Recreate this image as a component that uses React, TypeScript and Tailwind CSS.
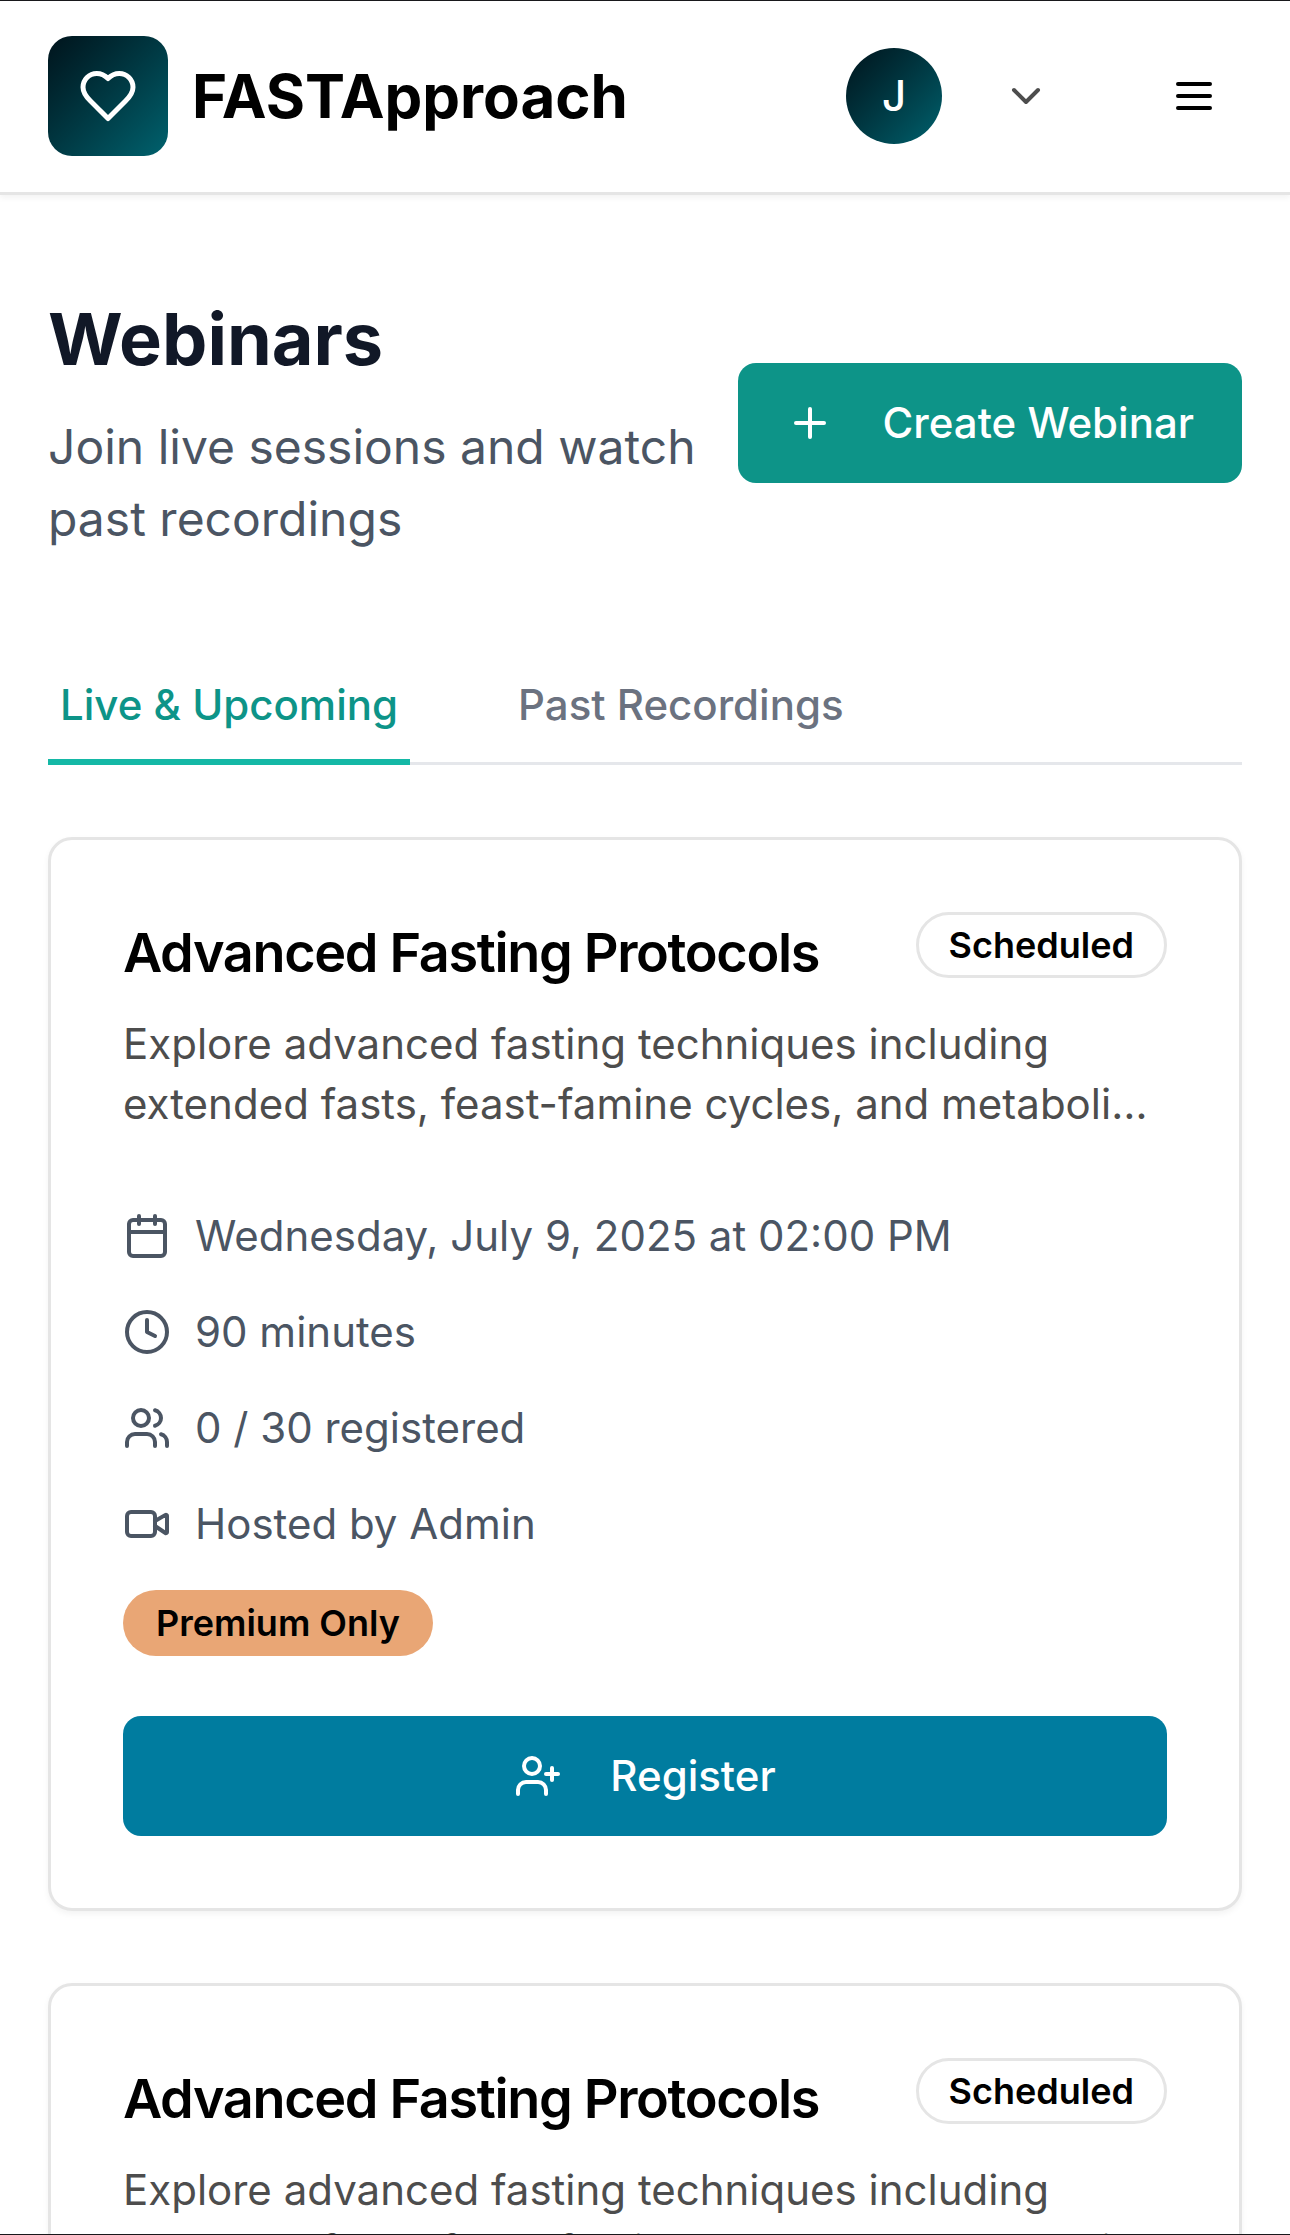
import React from "react";
import { Calendar, ChevronDown, Clock, Plus, UserPlus, Users, Video } from "lucide-react";

const webinars = [
  {
    id: 1,
    title: "Advanced Fasting Protocols",
    description:
      "Explore advanced fasting techniques including extended fasts, feast-famine cycles, and metabolic flexibility.",
    date: "Wednesday, July 9, 2025 at 02:00 PM",
    duration: "90 minutes",
    registered: "0 / 30 registered",
    host: "Hosted by Admin",
  },
  {
    id: 2,
    title: "Advanced Fasting Protocols",
    description:
      "Explore advanced fasting techniques including extended fasts, feast-famine cycles, and metabolic flexibility.",
    date: "Wednesday, July 9, 2025 at 02:00 PM",
    duration: "90 minutes",
    registered: "0 / 30 registered",
    host: "Hosted by Admin",
  },
];

const HeartIcon = () => (
  <svg viewBox="0 0 24 24" fill="none" stroke="currentColor" strokeWidth="2" strokeLinecap="round" strokeLinejoin="round" className="size-15 text-white">
    <path d="M19 14c1.49-1.46 3-3.21 3-5.5A5.5 5.5 0 0 0 16.5 3c-1.76 0-3 .5-4.5 2-1.5-1.5-2.74-2-4.5-2A5.5 5.5 0 0 0 2 8.5c0 2.3 1.5 4.05 3 5.5l7 7Z" />
  </svg>
);

const MenuIcon = () => (
  <svg viewBox="0 0 24 24" fill="none" stroke="currentColor" strokeWidth="2" strokeLinecap="round" className="size-12 text-black">
    <path d="M4 6h16M4 12h16M4 18h16" />
  </svg>
);

const Header = () => {
  return (
    <header className="flex items-center justify-between px-12 py-9 bg-white border-b-[3px] border-[#e5e5e5] shadow-[0_3px_6px_rgba(0,0,0,0.05)]">
      <a href="#" className="flex items-center gap-6">
        <div className="flex items-center justify-center size-30 rounded-3xl bg-linear-135 from-[#00141c] to-[#00626e]">
          <HeartIcon />
        </div>
        <span className="text-[60px] leading-[84px] font-bold text-black">FASTApproach</span>
      </a>

      <div className="flex items-center gap-12">
        <button aria-label="Account" className="flex items-center gap-15 px-6">
          <span className="flex items-center justify-center size-24 rounded-full bg-linear-135 from-[#00141c] to-[#00626e] text-white text-[42px] leading-[60px] font-medium">
            J
          </span>
          <ChevronDown className="size-12 text-[#4d4d4d]" />
        </button>
        <button aria-label="Open menu" className="p-6 ml-6">
          <MenuIcon />
        </button>
      </div>
    </header>
  );
};

const Row = ({ icon: Icon, children }: { icon: React.ElementType; children: React.ReactNode }) => {
  return (
    <div className="flex items-center gap-6 text-[42px] leading-[60px] text-[#4b5563]">
      <Icon className="size-12 shrink-0" />
      <span>{children}</span>
    </div>
  );
};

const WebinarCard = ({ webinar }: { webinar: (typeof webinars)[number] }) => {
  return (
    <article className="p-18 bg-white border-[3px] border-[#e5e5e5] rounded-3xl shadow-[0_3px_6px_rgba(0,0,0,0.05)]">
      <div className="flex items-start justify-between">
        <h3 className="text-[54px] leading-[81px] font-semibold tracking-tight text-black">{webinar.title}</h3>
        <span className="px-[30px] py-1.5 border-[3px] border-[#e5e5e5] rounded-full text-4xl leading-12 font-semibold text-black">
          Scheduled
        </span>
      </div>
      <p className="mt-[21px] text-[42px] leading-[60px] text-[#4d4d4d] line-clamp-2">{webinar.description}</p>

      <div className="flex flex-col gap-9 mt-18">
        <Row icon={Calendar}>{webinar.date}</Row>
        <Row icon={Clock}>{webinar.duration}</Row>
        <Row icon={Users}>{webinar.registered}</Row>
        <Row icon={Video}>{webinar.host}</Row>
        <span className="self-start px-[30px] py-1.5 border-[3px] border-transparent rounded-full bg-[#e9a675] text-4xl leading-12 font-semibold text-black">
          Premium Only
        </span>
      </div>

      <button className="flex items-center justify-center gap-12 w-full mt-15 py-[30px] rounded-[18px] bg-[#007c9f] text-white text-[42px] leading-[60px] font-medium">
        <UserPlus className="size-12" />
        Register
      </button>
    </article>
  );
};

const App = () => {
  return (
    <div className="min-h-screen bg-white font-[Inter,sans-serif]">
      {/* hairlines at the edges of the window */}
      <div className="fixed inset-0 z-10 border-y border-[#18181b] pointer-events-none" />
      <Header />

      <main className="px-12 py-24">
        <div className="flex items-center justify-between">
          <div className="flex-1">
            <h1 className="text-7xl leading-24 font-bold text-[#111827]">Webinars</h1>
            <p className="mt-6 text-5xl leading-18 text-[#4b5563]">Join live sessions and watch past recordings</p>
          </div>
          <button className="flex items-center gap-12 shrink-0 px-12 py-[30px] rounded-[18px] bg-[#0d9488] text-white text-[42px] leading-[60px] font-medium">
            <Plus className="size-12" />
            Create Webinar
          </button>
        </div>

        <nav className="flex gap-24 mt-24 border-b-[3px] border-[#e5e7eb] text-[42px] leading-[60px] font-medium">
          <button className="px-3 py-6 -mb-[3px] border-b-[6px] border-[#14b8a6] text-[#0d9488]">
            Live &amp; Upcoming
          </button>
          <button className="px-3 py-6 -mb-[3px] border-b-[6px] border-transparent text-[#6b7280]">
            Past Recordings
          </button>
        </nav>

        <div className="flex flex-col gap-18 mt-18">
          {webinars.map((webinar) => (
            <WebinarCard key={webinar.id} webinar={webinar} />
          ))}
        </div>
      </main>
    </div>
  );
};

export default App;
